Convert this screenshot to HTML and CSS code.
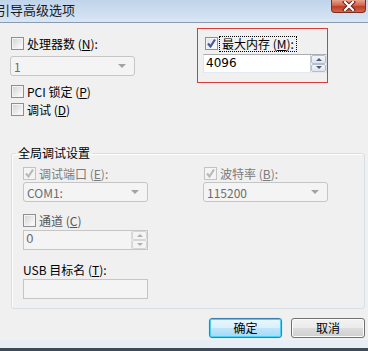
FILE: index.html
```html
<!DOCTYPE html>
<html lang="zh-CN">
<head>
    <meta charset="UTF-8">
    <title>引导高级选项</title>
    <link rel="stylesheet" href="styles.css">
</head>
<body>
    <div class="window">
        <div class="titlebar">
            <span class="title">引导高级选项</span>
            <span class="close-btn">
                <svg width="14" height="10" viewBox="0 0 14 10">
                    <path d="M3 1 L11 9 M11 1 L3 9" stroke="#5a1a10" stroke-width="4" stroke-linecap="square"/>
                    <path d="M3 1 L11 9 M11 1 L3 9" stroke="#fff" stroke-width="2.2" stroke-linecap="square"/>
                </svg>
            </span>
        </div>

        <div class="top">
            <div class="col-left">
                <label class="check">
                    <span class="box"></span>
                    <span>处理器数 (<u>N</u>):</span>
                </label>
                <div class="combo disabled cpu-combo">
                    <span class="combo-value">1</span>
                    <span class="arrow"></span>
                </div>
                <label class="check pci-row">
                    <span class="box"></span>
                    <span>PCI 锁定 (<u>P</u>)</span>
                </label>
                <label class="check debug-row">
                    <span class="box"></span>
                    <span>调试 (<u>D</u>)</span>
                </label>
            </div>

            <div class="memory-box">
                <label class="check memory-check">
                    <span class="box checked">
                        <svg width="11" height="11" viewBox="0 0 11 11">
                            <path d="M2 5.5 L4.5 8.5 L9 1.5" fill="none" stroke="#3f5a9a" stroke-width="2.2"/>
                        </svg>
                    </span>
                    <span class="focus">最大内存 (<u>M</u>):</span>
                </label>
                <div class="spin memory-spin">
                    <span class="spin-value">4096</span>
                    <span class="spin-btns">
                        <span class="spin-up"></span>
                        <span class="spin-down"></span>
                    </span>
                </div>
            </div>
        </div>

        <fieldset class="group">
            <legend>全局调试设置</legend>
            <div class="group-row">
                <div class="group-col">
                    <label class="check disabled">
                        <span class="box checked">
                            <svg width="11" height="11" viewBox="0 0 11 11">
                                <path d="M2 5.5 L4.5 8.5 L9 1.5" fill="none" stroke="#b9b9b9" stroke-width="2.2"/>
                            </svg>
                        </span>
                        <span>调试端口 (<u>E</u>):</span>
                    </label>
                    <div class="combo disabled port-combo">
                        <span class="combo-value">COM1:</span>
                        <span class="arrow"></span>
                    </div>
                </div>
                <div class="group-col">
                    <label class="check disabled">
                        <span class="box checked">
                            <svg width="11" height="11" viewBox="0 0 11 11">
                                <path d="M2 5.5 L4.5 8.5 L9 1.5" fill="none" stroke="#b9b9b9" stroke-width="2.2"/>
                            </svg>
                        </span>
                        <span>波特率 (<u>B</u>):</span>
                    </label>
                    <div class="combo disabled port-combo">
                        <span class="combo-value">115200</span>
                        <span class="arrow"></span>
                    </div>
                </div>
            </div>

            <label class="check channel-row">
                <span class="box"></span>
                <span>通道 (<u>C</u>)</span>
            </label>
            <div class="spin disabled channel-spin">
                <span class="spin-value">0</span>
                <span class="spin-btns">
                    <span class="spin-up"></span>
                    <span class="spin-down"></span>
                </span>
            </div>

            <div class="usb-label">USB 目标名 (<u>T</u>):</div>
            <div class="textbox disabled"></div>
        </fieldset>

        <div class="buttons">
            <button class="btn btn-default">确定</button>
            <button class="btn">取消</button>
        </div>

        <div class="frame-bottom"></div>
    </div>
</body>
</html>
```

FILE: styles.css
```css
body {
    margin: 0;
    background: #f0f0f0;
    font-family: "Noto Sans CJK SC", "Liberation Sans", sans-serif;
    font-size: 12px;
    color: #000;
}

u {
    text-decoration: underline;
    text-underline-offset: 1px;
}

.window {
    width: 368px;
    height: 351px;
    display: flex;
    flex-direction: column;
    background: #f0f0f0;
    overflow: hidden;
}

/* title bar */
.titlebar {
    height: 22px;
    display: flex;
    align-items: flex-start;
    justify-content: space-between;
    background: linear-gradient(#bfd4eb, #d9e6f4);
    border-bottom: 1px solid #8a9bb1;
}

.title {
    margin: 1px 0 0 -3px;
    font-size: 13px;
    line-height: 17px;
    color: #1b1b1b;
}

.close-btn {
    width: 35px;
    height: 13px;
    margin-right: 2px;
    display: flex;
    align-items: center;
    justify-content: center;
    background: linear-gradient(#e6a48f, #d4634a 45%, #c03b25 55%, #d06a4d);
    border: 1px solid #7b2d22;
    border-top: 0;
    border-radius: 0 0 4px 4px;
    box-sizing: border-box;
}

/* checkbox rows */
.check {
    height: 13px;
    display: flex;
    align-items: center;
    gap: 3px;
    line-height: 13px;
    white-space: nowrap;
}

.box {
    width: 13px;
    height: 13px;
    box-sizing: border-box;
    border: 1px solid #8e8f8f;
    background: linear-gradient(135deg, #d2d2d2, #f7f7f7 80%);
    box-shadow: inset 0 0 0 1px #f4f4f4;
    display: flex;
    align-items: center;
    justify-content: center;
    flex-shrink: 0;
}

.box.checked {
    background: linear-gradient(135deg, #e3e3e3, #fbfbfb);
}

.check.disabled {
    color: #7b7b7b;
}

.check.disabled .box {
    border-color: #c3c3c3;
    background: #f4f4f4;
    box-shadow: none;
}

/* top area */
.top {
    display: flex;
    align-items: flex-start;
    padding-left: 10px;
}

.col-left {
    width: 125px;
    margin-top: 14px;
}

.col-left .check {
    padding-left: 1px;
}

.cpu-combo {
    margin-top: 6px;
}

.pci-row {
    margin-top: 9px;
}

.debug-row {
    margin-top: 5px;
}

.memory-box {
    width: 131px;
    height: 55px;
    margin: 5px 0 0 62px;
    box-sizing: border-box;
    border: 1px solid #d93b3b;
    padding: 8px 0 0 5px;
}

.memory-check {
    padding-left: 2px;
    gap: 1px;
}

.focus {
    border: 1px dotted #000;
    padding: 0 2px;
    line-height: 14px;
}

.memory-spin {
    margin-top: 4px;
    width: 124px;
}

/* combo boxes */
.combo {
    height: 20px;
    box-sizing: border-box;
    display: flex;
    align-items: center;
    justify-content: space-between;
    padding: 0 8px 0 3px;
    border: 1px solid #707070;
    border-radius: 3px;
    background: #fff;
}

.combo.disabled {
    border-color: #c5c5c5;
    background: #f4f4f4;
    color: #6d6d6d;
}

.cpu-combo {
    width: 125px;
}

.arrow {
    width: 0;
    height: 0;
    border-left: 4px solid transparent;
    border-right: 4px solid transparent;
    border-top: 4px solid #a3a3a3;
}

/* spin boxes */
.spin {
    height: 19px;
    box-sizing: border-box;
    display: flex;
    align-items: stretch;
    border: 1px solid #abadb3;
    border-color: #abadb3 #dbdfe6 #e3e9ef #e2e3ea;
    background: #fff;
}

.spin-value {
    flex: 1;
    padding-left: 2px;
    line-height: 17px;
    font-family: "DejaVu Sans", sans-serif;
    font-size: 12px;
}

.spin-btns {
    width: 15px;
    display: flex;
    flex-direction: column;
    border-left: 1px solid #c9d0da;
}

.spin-up,
.spin-down {
    flex: 1;
    display: flex;
    align-items: center;
    justify-content: center;
    background: linear-gradient(#f4f6f9, #dfe4ea);
    border: 1px solid #b6bec8;
    border-radius: 2px;
}

.spin-up::after {
    content: "";
    border-left: 3px solid transparent;
    border-right: 3px solid transparent;
    border-bottom: 3px solid #4b5d7f;
}

.spin-down::after {
    content: "";
    border-left: 3px solid transparent;
    border-right: 3px solid transparent;
    border-top: 3px solid #4b5d7f;
}

.spin.disabled {
    border-color: #c5c5c5;
    background: #f4f4f4;
    color: #6d6d6d;
}

.spin.disabled .spin-btns {
    border-left-color: #dadada;
}

.spin.disabled .spin-up,
.spin.disabled .spin-down {
    background: #f4f4f4;
    border-color: #d6d6d6;
}

.spin.disabled .spin-up::after {
    border-bottom-color: #b0b0b0;
}

.spin.disabled .spin-down::after {
    border-top-color: #b0b0b0;
}

/* group box */
.group {
    margin: 30px 3px 0 11px;
    padding: 7px 11px 9px 11px;
    border: 1px solid #d5dfe5;
    border-radius: 3px;
    box-shadow: inset 1px 1px 0 #fff;
    min-width: 0;
}

.group legend {
    margin-left: -7px;
    padding: 0 2px;
    line-height: 14px;
    font-size: 12px;
}

.group-row {
    display: flex;
    gap: 55px;
}

.group-col {
    width: 125px;
}

.group-col .combo {
    margin-top: 2px;
}

.group-col:last-child .check {
    padding-left: 1px;
}

.channel-row {
    margin-top: 12px;
    color: #555;
}

.channel-spin {
    width: 125px;
    height: 20px;
    margin-top: 3px;
}

.usb-label {
    margin-top: 13px;
    height: 13px;
    line-height: 13px;
}

.textbox {
    width: 125px;
    height: 20px;
    margin-top: 3px;
    box-sizing: border-box;
    border: 1px solid #c5c5c5;
    background: #f4f4f4;
}

/* dialog buttons */
.buttons {
    display: flex;
    justify-content: flex-end;
    gap: 9px;
    margin: 9px 3px 0 0;
}

.btn {
    width: 73px;
    height: 20px;
    padding: 0;
    font-family: inherit;
    font-size: 12px;
    line-height: 18px;
    color: #000;
    border: 1px solid #707070;
    border-radius: 3px;
    background: linear-gradient(#f2f2f2, #ebebeb 50%, #dddddd 50%, #cfcfcf);
    box-shadow: inset 0 0 0 1px #fcfcfc;
}

.btn-default {
    width: 73px;
    border-color: #3c7fb1;
    background: linear-gradient(#eaf6fd, #d9f0fc 50%, #bee6fd 50%, #a7d9f5);
    box-shadow: inset 0 0 0 1px #48d2f8, 0 0 1px #48d2f8;
}

.btn:last-child {
    width: 74px;
}

.frame-bottom {
    margin-top: auto;
    height: 8px;
    background: #e8eef5;
    border-bottom: 3px solid #3e4a57;
}
```
